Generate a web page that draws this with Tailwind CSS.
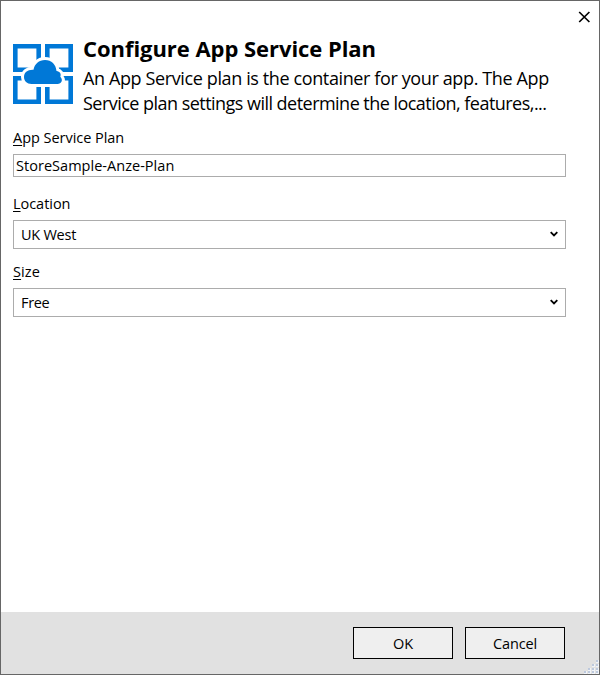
<!DOCTYPE html>
<html lang="en"><head><meta charset="utf-8"><title>Configure App Service Plan</title>
<script src="https://cdn.jsdelivr.net/npm/@tailwindcss/browser@4"></script></head>
<body class="bg-white">
<main class="relative flex h-[675px] w-[600px] flex-col border border-[#666] bg-white font-['Open_Sans','Noto_Sans',sans-serif] text-[14.5px] leading-5 text-black">
  <button aria-label="Close" class="absolute top-[10px] right-[8px]">
    <svg class="block" width="13" height="12" viewBox="0 0 13 12" fill="none" stroke="#000" stroke-width="1.7"><path d="M1.200 1 11.400 11M11.400 1 1.200 11"/></svg>
  </button>
  <header class="flex h-[127px] gap-[10px] pt-[33px] pl-3">
    <svg class="mt-[10px] h-[60px] w-[60px] shrink-0" viewBox="0 0 60 60">
      <g fill="none" stroke="#0078d7" stroke-width="4.6"><path d="M2.300 2.300H25.700V25.700H2.300ZM34.300 2.300H57.700V25.700H34.300ZM2.300 34.300H25.700V57.700H2.300ZM34.300 34.300H57.700V57.700H34.300Z"/></g>
      <path fill="#0078d7" stroke="#fff" stroke-width="6" paint-order="stroke" d="M18.500 40C14 40 11 37 11 33C11 28.500 14.500 25.500 20.500 25.800C21.500 20 26 16 32 16C38.500 16 43 20.500 43.500 27C47 27.500 48.500 30 47.300 32.800C50.500 36 48.500 40 44.500 40Z"/>
    </svg>
    <div class="whitespace-nowrap">
      <h1 class="h-[32px] text-[22px] leading-[28px] font-bold tracking-[-0.05px]">Configure App Service Plan</h1>
      <p class="text-[18px] leading-[25px]"><span class="tracking-[-0.38px]">An App Service plan is the container for your app. The App</span><br><span class="tracking-[-0.53px]">Service plan settings will determine the location, features,...</span></p>
    </div>
  </header>
  <section class="flex flex-col pl-3">
    <label class="h-[26px] tracking-[-0.04px]"><span class="underline underline-offset-2">A</span>pp Service Plan</label>
    <div class="flex h-[23px] w-[553px] items-center border border-[#acacac] pl-[2px] tracking-[0.03px]">StoreSample-Anze-Plan</div>
    <label class="mt-[17px] h-[26px] tracking-[-0.04px]"><span class="underline underline-offset-2">L</span>ocation</label>
    <div class="flex h-[29px] w-[553px] items-center justify-between border border-[#acacac] pr-[7px] pl-[7px] tracking-[-0.25px]">UK West<svg width="8" height="7" viewBox="0 0 8 7" fill="none" stroke="#000" stroke-width="1.8"><path d="M.7 1.200 4 4.500 7.300 1.200"/></svg></div>
    <label class="mt-[13px] h-[26px] tracking-[0.1px]"><span class="underline underline-offset-2">S</span>ize</label>
    <div class="flex h-[29px] w-[553px] items-center justify-between border border-[#acacac] pr-[7px] pl-[7px] tracking-[-0.35px]">Free<svg width="8" height="7" viewBox="0 0 8 7" fill="none" stroke="#000" stroke-width="1.8"><path d="M.7 1.200 4 4.500 7.300 1.200"/></svg></div>
  </section>
  <footer class="mt-auto flex h-[62px] shrink-0 justify-end gap-3 bg-[#e1e1e1] pt-[15px] pr-[34px]">
    <button class="h-8 w-[100px] border border-black bg-[#efefef] pt-[2px] tracking-[-0.1px]">OK</button>
    <button class="h-8 w-[100px] border border-black bg-[#efefef] pt-[2px] tracking-[-0.12px]">Cancel</button>
  </footer>
  <svg class="absolute right-0 bottom-0" width="16" height="16" viewBox="0 0 16 16" shape-rendering="crispEdges">
    <path fill="#f1f4f8" d="M13 2h3v3h-3zM13 6h3v3h-3zM9 6h3v3h-3zM13 10h3v3h-3zM9 10h3v3h-3zM5 10h3v3h-3zM13 13h3v3h-3zM9 13h3v3h-3zM5 13h3v3h-3zM1 13h3v3h-3z"/>
    <path fill="#bdc9dd" d="M13 2h2v2h-2zM13 6h2v2h-2zM9 6h2v2h-2zM13 10h2v2h-2zM9 10h2v2h-2zM5 10h2v2h-2zM13 13h2v2h-2zM9 13h2v2h-2zM5 13h2v2h-2zM1 13h2v2h-2z"/>
  </svg>
</main>
</body></html>
